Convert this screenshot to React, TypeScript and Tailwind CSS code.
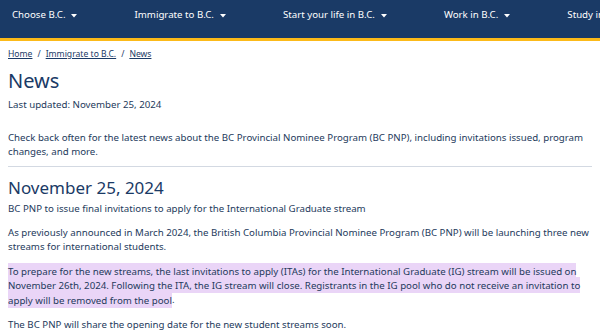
import React from 'react'

const navItems = ['Choose B.C.', 'Immigrate to B.C.', 'Start your life in B.C.', 'Work in B.C.', 'Study in B.C.']

function Caret() {
    return (
        <svg width="6" height="4" viewBox="0 0 6 4" className="ml-[6px] mt-[1px]">
            <path d="M0 0 L6 0 L3 3.5 Z" fill="white" />
        </svg>
    )
}

export default function App() {
    return (
        <div className="min-h-screen bg-white overflow-hidden" style={{ fontFamily: '"Noto Sans", sans-serif' }}>
            {/* Top navigation */}
            <div className="h-[38px] bg-[#1a3a66] border-b-[3px] border-[#fcba19] box-content">
                <div className="flex items-center h-full whitespace-nowrap text-white text-[9.7px] pl-[12px] pb-[7px] gap-[57px]">
                    {navItems.map((item) => (
                        <div key={item} className="flex items-center shrink-0">
                            <span>{item}</span>
                            <Caret />
                        </div>
                    ))}
                </div>
            </div>

            <div className="px-[8px] text-[#243a5c]">
                {/* Breadcrumb */}
                <div className="flex items-center gap-[5px] text-[8.6px] text-[#1a3a66] mt-[6px] leading-[14px]">
                    <a className="underline">Home</a>
                    <span>/</span>
                    <a className="underline">Immigrate to B.C.</a>
                    <span>/</span>
                    <a className="underline">News</a>
                </div>

                <h1 className="text-[20px] leading-[26px] text-[#1a3a66] mt-[7px]">News</h1>
                <p className="text-[9.7px] leading-[14px] mt-[4px]">Last updated: November 25, 2024</p>

                <p className="text-[9.7px] leading-[13.5px] mt-[19px]">
                    Check back often for the latest news about the BC Provincial Nominee Program (BC PNP), including invitations issued, program changes, and more.
                </p>

                <hr className="border-t border-[#d3d9e2] mt-[8px]" />

                <h2 className="text-[17px] leading-[22px] text-[#1a3a66] mt-[10px]">November 25, 2024</h2>
                <p className="text-[9.7px] leading-[14px] mt-[3px]">
                    BC PNP to issue final invitations to apply for the International Graduate stream
                </p>

                <p className="text-[9.7px] leading-[14px] mt-[10px]">
                    As previously announced in March 2024, the British Columbia Provincial Nominee Program (BC PNP) will be launching three new streams for international students.
                </p>

                <p className="text-[9.7px] leading-[14.5px] mt-[10px]">
                    <span className="bg-[#ead5f7] [box-decoration-break:clone] py-[1.5px]">
                        To prepare for the new streams, the last invitations to apply (ITAs) for the International Graduate (IG) stream will be issued on November 26th, 2024. Following the ITA, the IG stream will close. Registrants in the IG pool who do not receive an invitation to apply will be removed from the pool
                    </span>
                    .
                </p>

                <p className="text-[9.7px] leading-[14px] mt-[10px]">
                    The BC PNP will share the opening date for the new student streams soon.
                </p>
            </div>
        </div>
    )
}
